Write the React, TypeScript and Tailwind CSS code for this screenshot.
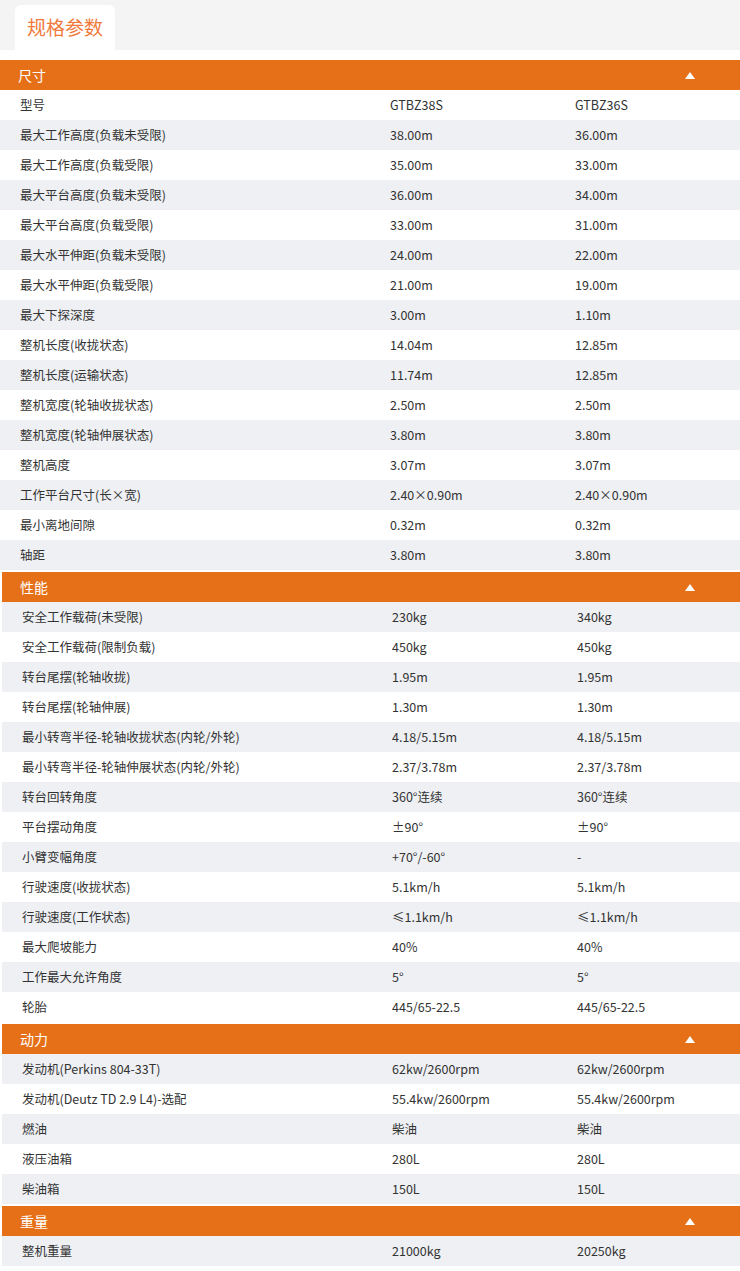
const sections: { title: string; firstGray: boolean; rows: [string, string, string][] }[] = [
  {
    title: "尺寸",
    firstGray: false,
    rows: [
      ["型号", "GTBZ38S", "GTBZ36S"],
      ["最大工作高度(负载未受限)", "38.00m", "36.00m"],
      ["最大工作高度(负载受限)", "35.00m", "33.00m"],
      ["最大平台高度(负载未受限)", "36.00m", "34.00m"],
      ["最大平台高度(负载受限)", "33.00m", "31.00m"],
      ["最大水平伸距(负载未受限)", "24.00m", "22.00m"],
      ["最大水平伸距(负载受限)", "21.00m", "19.00m"],
      ["最大下探深度", "3.00m", "1.10m"],
      ["整机长度(收拢状态)", "14.04m", "12.85m"],
      ["整机长度(运输状态)", "11.74m", "12.85m"],
      ["整机宽度(轮轴收拢状态)", "2.50m", "2.50m"],
      ["整机宽度(轮轴伸展状态)", "3.80m", "3.80m"],
      ["整机高度", "3.07m", "3.07m"],
      ["工作平台尺寸(长×宽)", "2.40×0.90m", "2.40×0.90m"],
      ["最小离地间隙", "0.32m", "0.32m"],
      ["轴距", "3.80m", "3.80m"],
    ],
  },
  {
    title: "性能",
    firstGray: true,
    rows: [
      ["安全工作载荷(未受限)", "230kg", "340kg"],
      ["安全工作载荷(限制负载)", "450kg", "450kg"],
      ["转台尾摆(轮轴收拢)", "1.95m", "1.95m"],
      ["转台尾摆(轮轴伸展)", "1.30m", "1.30m"],
      ["最小转弯半径-轮轴收拢状态(内轮/外轮)", "4.18/5.15m", "4.18/5.15m"],
      ["最小转弯半径-轮轴伸展状态(内轮/外轮)", "2.37/3.78m", "2.37/3.78m"],
      ["转台回转角度", "360°连续", "360°连续"],
      ["平台摆动角度", "±90°", "±90°"],
      ["小臂变幅角度", "+70°/-60°", "-"],
      ["行驶速度(收拢状态)", "5.1km/h", "5.1km/h"],
      ["行驶速度(工作状态)", "≤1.1km/h", "≤1.1km/h"],
      ["最大爬坡能力", "40%", "40%"],
      ["工作最大允许角度", "5°", "5°"],
      ["轮胎", "445/65-22.5", "445/65-22.5"],
    ],
  },
  {
    title: "动力",
    firstGray: true,
    rows: [
      ["发动机(Perkins 804-33T)", "62kw/2600rpm", "62kw/2600rpm"],
      ["发动机(Deutz TD 2.9 L4)-选配", "55.4kw/2600rpm", "55.4kw/2600rpm"],
      ["燃油", "柴油", "柴油"],
      ["液压油箱", "280L", "280L"],
      ["柴油箱", "150L", "150L"],
    ],
  },
  {
    title: "重量",
    firstGray: true,
    rows: [["整机重量", "21000kg", "20250kg"]],
  },
];

export default function App() {
  return (
    <div
      className="w-[740px] bg-white text-[#333]"
      style={{ fontFamily: '"Liberation Sans Narrow", "Noto Sans CJK SC", sans-serif' }}
    >
      {/* 标签栏 */}
      <div className="flex h-[50px] items-end bg-[#f4f4f4] px-[15px]">
        <div className="flex h-[45px] w-[100px] items-center justify-center rounded-t-md bg-white text-[19px] text-[#f07a3c]">
          规格参数
        </div>
      </div>
      <div className="h-[10px]" />
      {sections.map((s, si) => (
        <div key={s.title} className={si === 0 ? "" : "mt-[2px] pl-[2px]"}>
          <div className="flex h-[30px] items-center justify-between bg-[#e57017] pl-[18px] pr-[45px] text-[14px] text-white">
            <span>{s.title}</span>
            <svg width="10" height="7" viewBox="0 0 10 7">
              <path d="M5 0 L10 7 L0 7 Z" fill="white" />
            </svg>
          </div>
          {s.rows.map((r, i) => {
            const gray = s.firstGray ? i % 2 === 0 : i % 2 === 1;
            return (
              <div
                key={r[0]}
                className={`flex h-[30px] items-center text-[12.5px] ${gray ? "bg-[#eef0f3]" : "bg-white"}`}
              >
                <span className="w-[390px] pl-[20px]">{r[0]}</span>
                <span className="w-[185px]">{r[1]}</span>
                <span>{r[2]}</span>
              </div>
            );
          })}
        </div>
      ))}
    </div>
  );
}
